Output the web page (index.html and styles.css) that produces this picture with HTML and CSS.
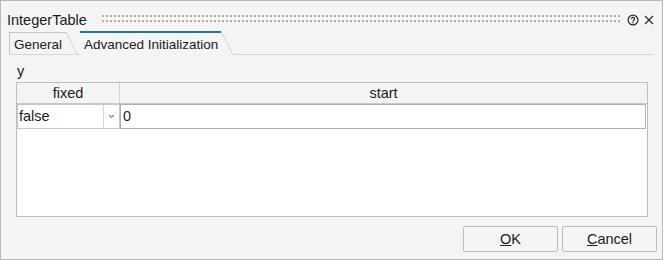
FILE: index.html
```html
<!DOCTYPE html>
<html>
<head>
<meta charset="utf-8">
<link rel="stylesheet" href="styles.css">
</head>
<body>
<div class="window">
  <div class="titlebar">
    <span class="title">IntegerTable</span>
    <svg class="grip" height="7">
      <defs>
        <pattern id="gripdots" width="4" height="5" patternUnits="userSpaceOnUse">
          <rect x="0" y="0" width="2" height="2" fill="#adadad"/>
        </pattern>
      </defs>
      <rect x="0" y="0" width="100%" height="100%" fill="url(#gripdots)"/>
    </svg>
    <svg class="help" width="12" height="12" viewBox="0 0 12 12">
      <circle cx="6" cy="6" r="4.9" fill="none" stroke="#2a2a2a" stroke-width="1.2"/>
      <path d="M4.5 4.9a1.5 1.5 0 1 1 2.2 1.3c-.5.3-.7.6-.7 1.1v.3" fill="none" stroke="#2a2a2a" stroke-width="1.2"/>
      <circle cx="6" cy="8.8" r=".7" fill="#2a2a2a"/>
    </svg>
    <svg class="close" width="10" height="10" viewBox="0 0 10 10">
      <path d="M1 1L9 9M9 1L1 9" stroke="#2a2a2a" stroke-width="1.15" fill="none"/>
    </svg>
  </div>
  <div class="tabs">
    <div class="tab">General</div>
    <div class="tab active">Advanced Initialization</div>
    <div class="tab-fill"></div>
  </div>
  <div class="content">
    <div class="label">y</div>
    <div class="table">
      <div class="thead">
        <div class="th th-fixed">fixed</div>
        <div class="th th-start">start</div>
      </div>
      <div class="row">
        <div class="combo">
          <span class="combo-value">false</span>
          <span class="combo-btn">
            <svg width="7" height="5" viewBox="0 0 7 5"><path d="M1 1L3.5 3.5L6 1" fill="none" stroke="#8a8a8a" stroke-width="1.2"/></svg>
          </span>
        </div>
        <div class="input">0</div>
      </div>
    </div>
  </div>
  <div class="footer">
    <button class="btn"><u>O</u>K</button>
    <button class="btn"><u>C</u>ancel</button>
  </div>
</div>
</body>
</html>
```

FILE: styles.css
```css
html, body {
  margin: 0;
  padding: 0;
  background: #ffffff;
}

body {
  font-family: "Liberation Sans", Arial, sans-serif;
  font-size: 14.5px;
  color: #1b1b1b;
}

.window {
  width: 663px;
  height: 260px;
  box-sizing: border-box;
  border: 1px solid #b9b9b9;
  background: #f4f4f4;
  display: flex;
  flex-direction: column;
}

.titlebar {
  height: 30px;
  box-sizing: border-box;
  padding: 8px 8px 0 6px;
  display: flex;
  align-items: center;
  line-height: 16px;
}

.title {
  font-size: 14.5px;
  color: #1b1b1b;
}

.grip {
  display: block;
  flex: 1;
  min-width: 0;
  height: 7px;
  margin: 0 7px 3px 15px;
}

.help {
  display: block;
  margin-right: 5px;
}

.close {
  display: block;
}

.tabs {
  height: 24px;
  box-sizing: border-box;
  margin: 0 8px 0 8px;
  border-bottom: 1px solid #d6d6d6;
  display: flex;
  align-items: flex-end;
  font-size: 13.5px;
  line-height: 16px;
}

.tab {
  position: relative;
  height: 22px;
  box-sizing: border-box;
  padding: 4px 4px 0 4px;
  border-top: 1px solid #c6c6c6;
  border-left: 1px solid #c6c6c6;
  margin-right: 14px;
  white-space: nowrap;
  color: #1b1b1b;
}

.tab::after {
  content: "";
  position: absolute;
  top: -1px;
  bottom: 0;
  right: -11px;
  width: 11px;
  background: linear-gradient(to top right, transparent calc(50% - 0.7px), #c6c6c6 50%, transparent calc(50% + 0.7px));
}

.tab.active {
  height: 24px;
  margin-bottom: -1px;
  border-top: 2px solid #1679a8;
  border-left: none;
  padding: 4px 3px 0 4px;
  background: #f4f4f4;
  margin-right: 0;
}

.tab.active::after {
  top: -2px;
  bottom: 0;
  right: -12px;
  width: 12px;
  background: linear-gradient(to top right, #f4f4f4 calc(50% - 0.7px), #c6c6c6 50%, transparent calc(50% + 0.7px));
}

.tab-fill {
  flex: 1;
}

.content {
  padding: 8px 14px 0 15px;
}

.label {
  line-height: 16px;
  height: 16px;
  padding-left: 1px;
  margin-bottom: 3px;
}

.table {
  height: 135px;
  box-sizing: border-box;
  border: 1px solid #bdbdbd;
  background: #ffffff;
}

.thead {
  display: flex;
  height: 21px;
  box-sizing: border-box;
  border-bottom: 1px solid #c8c8c8;
  background: #f4f4f4;
  line-height: 20px;
}

.th {
  text-align: center;
}

.th-fixed {
  width: 103px;
  box-sizing: border-box;
  border-right: 1px solid #d2d2d2;
}

.th-start {
  flex: 1;
}

.row {
  display: flex;
  height: 25px;
}

.combo {
  width: 103px;
  box-sizing: border-box;
  border: 1px solid #c6c6c6;
  display: flex;
  background: #ffffff;
}

.combo-value {
  flex: 1;
  padding-left: 1px;
  line-height: 23px;
}

.combo-btn {
  width: 15px;
  border-left: 1px solid #d6d6d6;
  display: flex;
  align-items: center;
  justify-content: center;
}

.combo-btn svg {
  display: block;
}

.input {
  flex: 1;
  margin-right: 1px;
  box-sizing: border-box;
  border: 1px solid #b0b0b0;
  padding-left: 2px;
  line-height: 23px;
  background: #ffffff;
}

.footer {
  display: flex;
  justify-content: flex-end;
  gap: 4px;
  padding: 9px 5px 7px 0;
  margin-top: auto;
}

.btn {
  width: 95px;
  height: 26px;
  box-sizing: border-box;
  border: 1px solid #bdbdbd;
  border-radius: 2px;
  background: #f5f5f5;
  font-family: "Liberation Sans", Arial, sans-serif;
  font-size: 14.5px;
  color: #1b1b1b;
  padding: 0;
  line-height: 24px;
}
```
